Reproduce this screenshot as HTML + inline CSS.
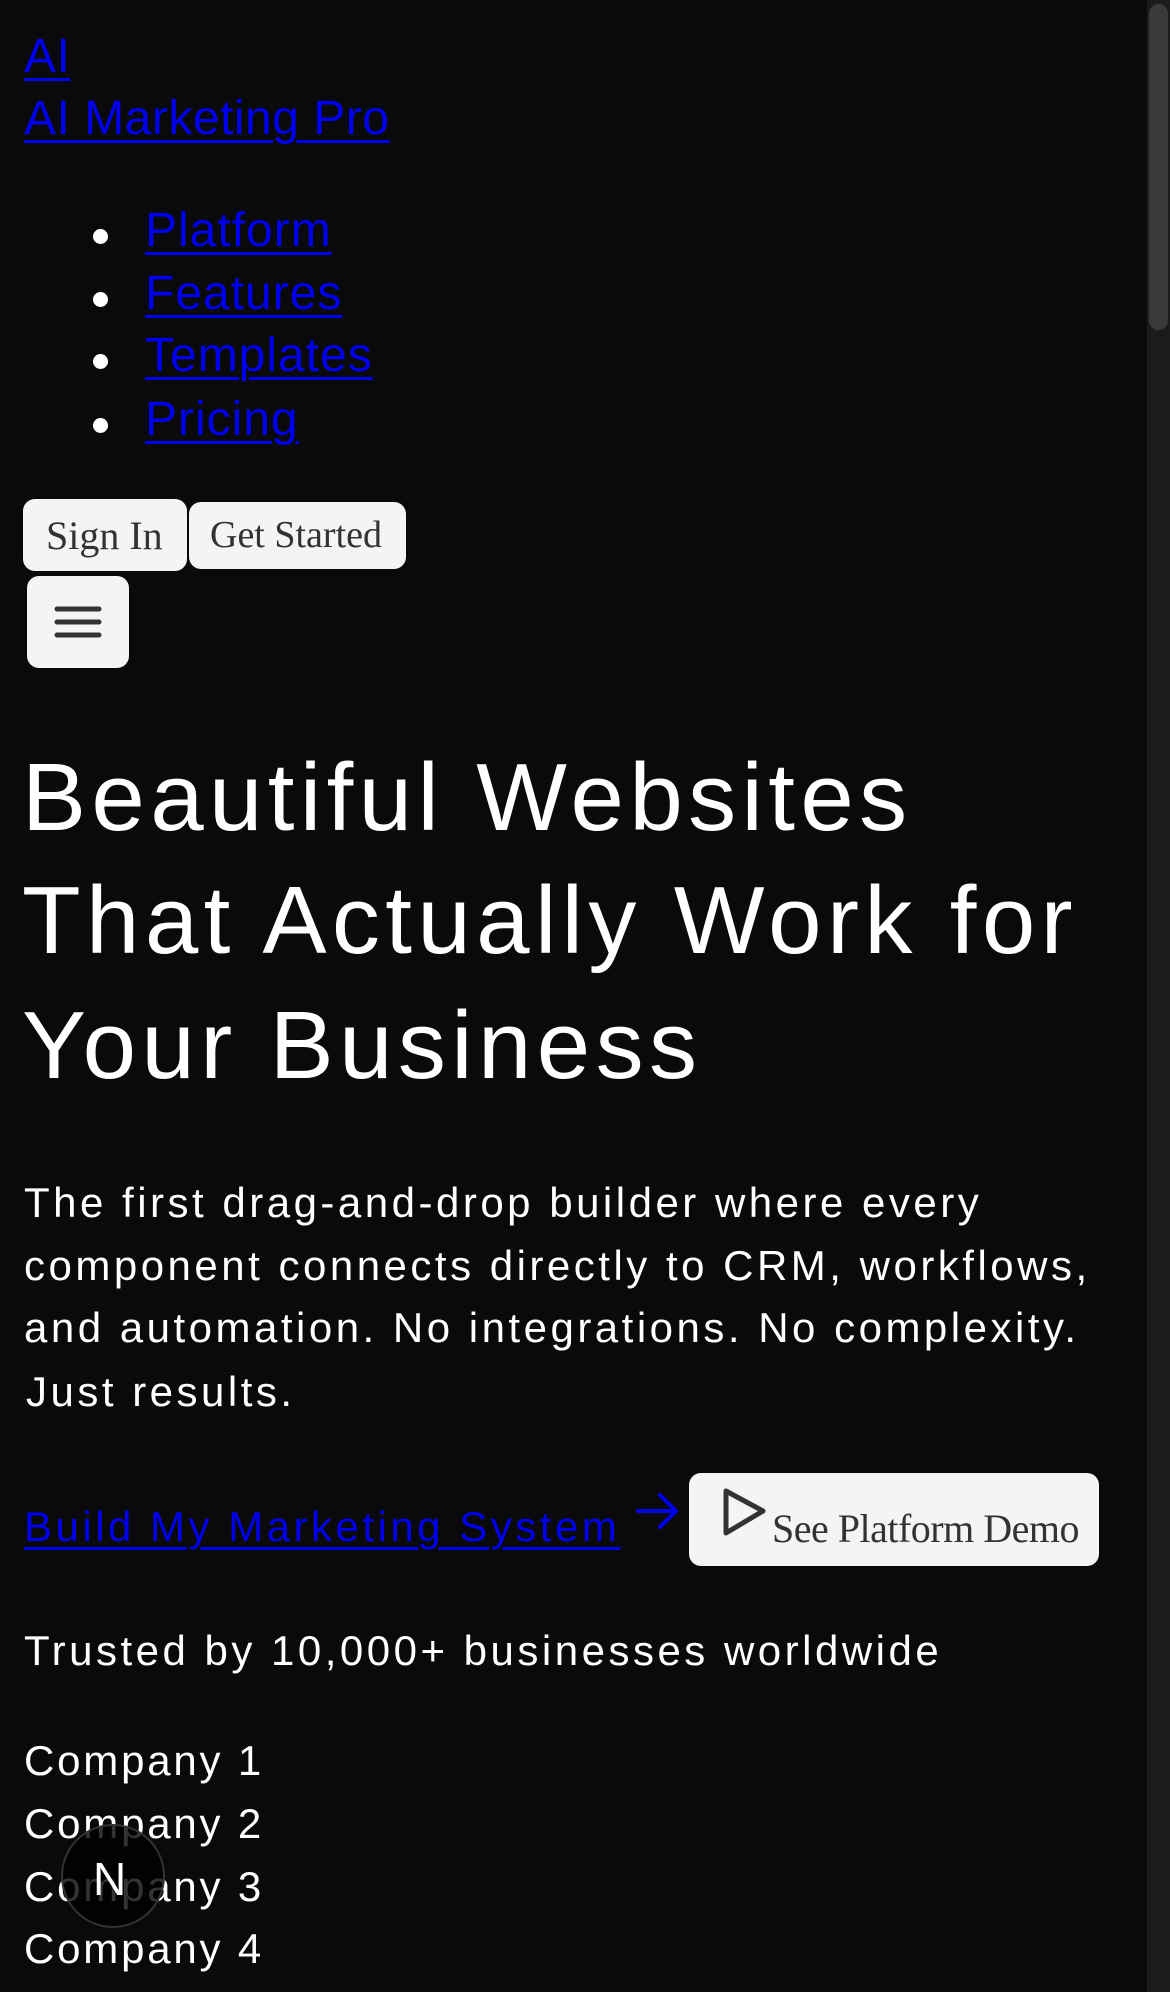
<!DOCTYPE html>
<html><head><meta charset="utf-8"><style>
html,body{margin:0;padding:0;background:#0a0a0a;width:1170px;height:1992px;overflow:hidden;position:relative;font-family:"Liberation Sans",Arial,sans-serif;}
.t{position:absolute;white-space:nowrap;line-height:1;}
a{color:#0000ee;text-decoration:underline;text-decoration-thickness:3px;text-underline-offset:6px;}
.w{color:#fff;}
.p{letter-spacing:3.5px;}
.btn{position:absolute;background:#f4f4f4;border-radius:12px;font-family:"Liberation Serif",serif;color:#333;}
.dot{position:absolute;width:15px;height:15px;border-radius:50%;background:#fff;}
.n{letter-spacing:1px;}
</style></head><body>
<div class="t" style="left:24px;top:33px;font-size:48px;letter-spacing:0.5px"><a>AI</a></div>
<div class="t" style="left:24px;top:95px;font-size:48px;letter-spacing:0.5px"><a>AI Marketing Pro</a></div>

<div class="dot" style="left:93px;top:229px"></div>
<div class="dot" style="left:93px;top:292px"></div>
<div class="dot" style="left:93px;top:354px"></div>
<div class="dot" style="left:93px;top:418px"></div>
<div class="t n" style="left:145px;top:207px;font-size:48px;"><a>Platform</a></div>
<div class="t n" style="left:145px;top:270px;font-size:48px;"><a>Features</a></div>
<div class="t n" style="left:145px;top:332px;font-size:48px;"><a>Templates</a></div>
<div class="t n" style="left:145px;top:396px;font-size:48px;"><a>Pricing</a></div>

<div class="btn" style="left:23px;top:499px;width:164px;height:72px;"><span class="t" style="left:23px;top:17px;font-size:40px;">Sign In</span></div>
<div class="btn" style="left:189px;top:502px;width:217px;height:67px;"><span class="t" style="left:21px;top:14px;font-size:38px;">Get Started</span></div>
<div class="btn" style="left:27px;top:576px;width:102px;height:92px;">
<svg width="102" height="92" style="position:absolute;left:0;top:0"><g stroke="#333" stroke-width="5" stroke-linecap="round"><line x1="30" y1="33" x2="72" y2="33"/><line x1="30" y1="46" x2="72" y2="46"/><line x1="30" y1="59" x2="72" y2="59"/></g></svg></div>

<div class="t w" style="left:22px;top:750px;font-size:96px;letter-spacing:5.4px;">Beautiful Websites</div>
<div class="t w" style="left:22px;top:873px;font-size:96px;letter-spacing:5.4px;">That Actually Work for</div>
<div class="t w" style="left:22px;top:998px;font-size:96px;letter-spacing:5.4px;">Your Business</div>

<div class="t w p" style="left:24px;top:1182px;font-size:42px;">The first drag-and-drop builder where every</div>
<div class="t w p" style="left:24px;top:1245px;font-size:42px;">component connects directly to CRM, workflows,</div>
<div class="t w p" style="left:24px;top:1307px;font-size:42px;">and automation. No integrations. No complexity.</div>
<div class="t w p" style="left:26px;top:1371px;font-size:42px;">Just results.</div>

<div class="t p" style="left:24px;top:1506px;font-size:42px;"><a>Build My Marketing System</a></div>
<svg width="50" height="50" style="position:absolute;left:634px;top:1487px"><g stroke="#0000ee" stroke-width="4" fill="none" stroke-linecap="round" stroke-linejoin="round"><line x1="4" y1="24" x2="42" y2="24"/><polyline points="26,8 42,24 26,40"/></g></svg>
<div class="btn" style="left:689px;top:1473px;width:410px;height:93px;">
<svg width="50" height="60" style="position:absolute;left:30px;top:12px"><polygon points="7,6 44,26 7,48" fill="none" stroke="#333" stroke-width="5" stroke-linejoin="round"/></svg>
<span class="t" style="left:83px;top:36px;font-size:40px;letter-spacing:-0.5px">See Platform Demo</span></div>

<div class="t w p" style="left:24px;top:1630px;font-size:42px;">Trusted by 10,000+ businesses worldwide</div>
<div class="t w" style="left:24px;top:1740px;font-size:42px;letter-spacing:2.8px">Company 1</div>
<div class="t w" style="left:24px;top:1803px;font-size:42px;letter-spacing:2.8px">Company 2</div>
<div class="t w" style="left:24px;top:1866px;font-size:42px;letter-spacing:2.8px">Company 3</div>
<div class="t w" style="left:24px;top:1928px;font-size:42px;letter-spacing:2.8px">Company 4</div>

<div style="position:absolute;left:61px;top:1824px;width:104px;height:104px;border-radius:50%;background:rgba(0,0,0,0.8);border:2px solid #333;box-sizing:border-box;"></div>
<div class="t" style="left:93px;top:1856px;font-size:46px;color:#fff;">N</div>

<div style="position:absolute;left:1147px;top:0;width:23px;height:1992px;background:#1b1b1b;"></div>
<div style="position:absolute;left:1149px;top:4px;width:19px;height:326px;border-radius:10px;background:#3a3a3a;"></div>
</body></html>
